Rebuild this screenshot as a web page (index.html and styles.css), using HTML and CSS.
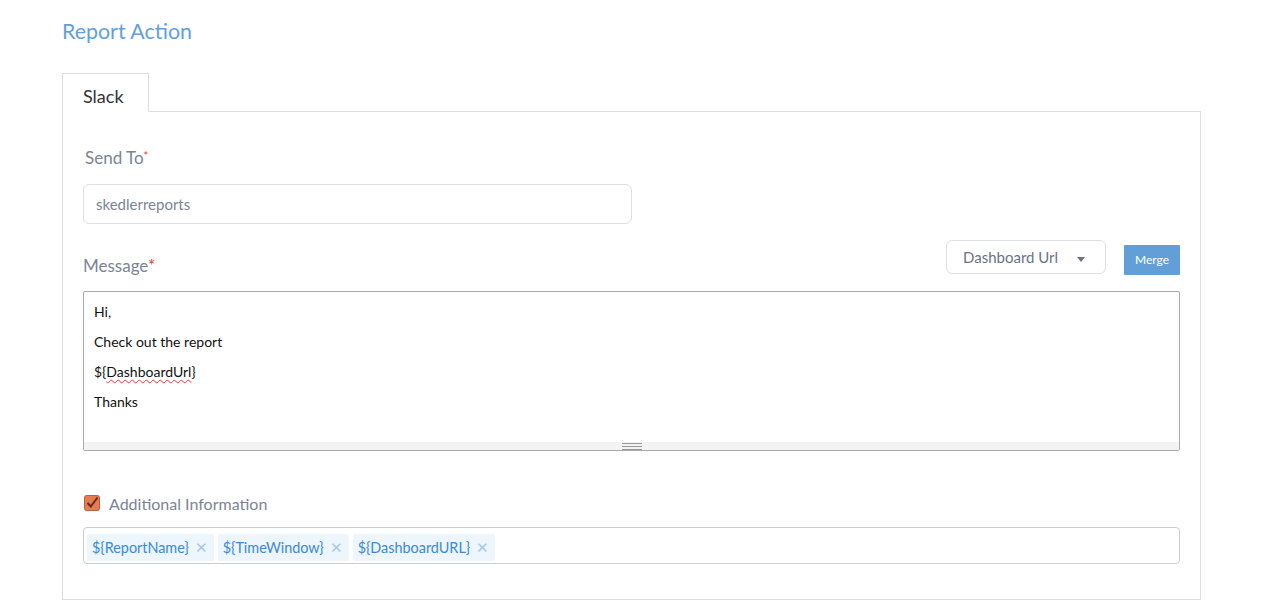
FILE: index.html
```html
<!DOCTYPE html>
<html>
<head>
<meta charset="utf-8">
<link rel="stylesheet" href="styles.css">
</head>
<body>
<div class="page">
  <h1 class="title">Report Action</h1>
  <div class="tabs"><div class="tab">Slack</div></div>
  <div class="panel">
    <div class="label">Send To<span class="req-sm">*</span></div>
    <div class="input">skedlerreports</div>
    <div class="msg-row">
      <div class="label msg-label">Message<span class="req">*</span></div>
      <div class="spacer"></div>
      <div class="dropdown"><span>Dashboard Url</span><span class="caret"></span></div>
      <div class="merge">Merge</div>
    </div>
    <div class="textarea">
      <div class="ta-body">
        <div class="line">Hi,</div>
        <div class="line">Check out the report</div>
        <div class="line">${<span class="spell">DashboardUrl</span>}</div>
        <div class="line">Thanks</div>
      </div>
      <div class="ta-bar"><span class="grip"></span></div>
    </div>
    <div class="check-row">
      <svg class="checkbox" width="16" height="16" viewBox="0 0 16 16">
        <rect x="0.5" y="0.5" width="15" height="15" rx="2" fill="#e97a50" stroke="#b8603f"/>
        <path d="M3.5 8 L6.8 11.5 L13.5 2.5" fill="none" stroke="#5a2e20" stroke-width="2"/>
      </svg>
      <span class="check-label">Additional Information</span>
    </div>
    <div class="tags">
      <span class="tag">${ReportName}<span class="x">✕</span></span>
      <span class="tag">${TimeWindow}<span class="x">✕</span></span>
      <span class="tag">${DashboardURL}<span class="x">✕</span></span>
    </div>
  </div>
</div>
</body>
</html>
```

FILE: styles.css
```css
body {
  margin: 0;
  background: #fff;
  font-family: Lato, "Open Sans", sans-serif;
}
.page {
  padding: 17px 65px 0 62px;
}
.title {
  margin: 0;
  font-size: 21.4px;
  font-weight: 400;
  line-height: 28px;
  color: #63a0db;
}
.tabs {
  margin-top: 28px;
  display: flex;
}
.tab {
  position: relative;
  z-index: 1;
  box-sizing: border-box;
  width: 87px;
  height: 39px;
  margin-bottom: -1px;
  padding: 9px 0 0 20px;
  border: 1px solid #ddd;
  border-bottom: 1px solid #fff;
  background: #fff;
  font-size: 18px;
  line-height: 26px;
  color: #333;
}
.panel {
  border: 1px solid #ddd;
  padding: 32px 20px 35px 20px;
}
.label {
  font-size: 17px;
  line-height: 24px;
  color: #7b8496;
  padding-left: 2px;
}
.req-sm {
  color: #e53935;
  font-size: 11px;
  vertical-align: 4px;
}
.req {
  color: #e53935;
}
.input {
  box-sizing: border-box;
  margin-top: 14px;
  width: 549px;
  height: 40px;
  border: 1px solid #dcdfe6;
  border-radius: 6px;
  padding-left: 12px;
  font-size: 15px;
  line-height: 38px;
  color: #7b8496;
}
.msg-row {
  display: flex;
  align-items: flex-start;
  margin-top: 16px;
}
.msg-label {
  margin-top: 14px;
  padding-left: 0;
}
.spacer {
  flex: 1;
}
.dropdown {
  box-sizing: border-box;
  width: 160px;
  height: 34px;
  border: 1px solid #dcdfe6;
  border-radius: 6px;
  padding-left: 16px;
  display: flex;
  align-items: center;
  font-size: 15px;
  color: #6b7385;
}
.caret {
  margin-left: 19px;
  margin-top: 4px;
  width: 0;
  height: 0;
  border-left: 4.5px solid transparent;
  border-right: 4.5px solid transparent;
  border-top: 5px solid #6b7385;
}
.merge {
  margin-top: 5px;
  margin-left: 18px;
  width: 56px;
  height: 30px;
  background: #629fd7;
  color: #fff;
  font-size: 12px;
  line-height: 30px;
  text-align: center;
  border-radius: 1px;
}
.textarea {
  margin-top: 13px;
  border: 1px solid #aaa;
  border-radius: 2px;
  display: flex;
  flex-direction: column;
}
.ta-body {
  height: 145px;
  padding: 5px 10px 0;
}
.line {
  font-size: 14px;
  line-height: 30px;
  color: #111;
}
.spell {
  text-decoration: underline wavy #e53935;
  text-decoration-thickness: 1px;
  text-underline-offset: 2px;
}
.ta-bar {
  height: 8px;
  background: #f3f3f3;
  display: flex;
  justify-content: center;
  align-items: center;
}
.grip {
  width: 20px;
  height: 5px;
  border-top: 1px solid #999;
  border-bottom: 1px solid #999;
  position: relative;
}
.grip::after {
  content: "";
  position: absolute;
  left: 0;
  right: 0;
  top: 2px;
  border-top: 1px solid #999;
}
.check-row {
  margin-top: 44px;
  display: flex;
  align-items: center;
  height: 16px;
}
.checkbox {
  margin-left: 1px;
  display: block;
}
.check-label {
  margin-left: 9px;
  font-size: 16px;
  color: #7b8496;
}
.tags {
  box-sizing: border-box;
  margin-top: 16px;
  height: 37px;
  border: 1px solid #c9cdd5;
  border-radius: 4px;
  padding: 6px 3px 0;
  display: flex;
  gap: 4px;
  align-items: flex-start;
}
.tag {
  height: 27px;
  background: #edf5fd;
  color: #3a8ad6;
  font-size: 14.4px;
  line-height: 27px;
  padding: 0 6px 0 5px;
  border-radius: 2px;
  display: flex;
  align-items: center;
}
.x {
  margin-left: 6px;
  color: #a9c8e6;
  font-size: 15px;
}
```
